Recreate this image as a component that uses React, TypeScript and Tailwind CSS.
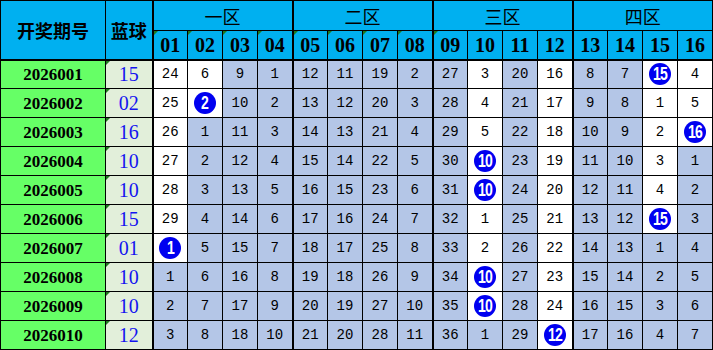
const draws = [
  { no: '2026001', ball: 15, miss: [24, 6, 9, 1, 12, 11, 19, 2, 27, 3, 20, 16, 8, 7, 0, 4] },
  { no: '2026002', ball: 2, miss: [25, 0, 10, 2, 13, 12, 20, 3, 28, 4, 21, 17, 9, 8, 1, 5] },
  { no: '2026003', ball: 16, miss: [26, 1, 11, 3, 14, 13, 21, 4, 29, 5, 22, 18, 10, 9, 2, 0] },
  { no: '2026004', ball: 10, miss: [27, 2, 12, 4, 15, 14, 22, 5, 30, 0, 23, 19, 11, 10, 3, 1] },
  { no: '2026005', ball: 10, miss: [28, 3, 13, 5, 16, 15, 23, 6, 31, 0, 24, 20, 12, 11, 4, 2] },
  { no: '2026006', ball: 15, miss: [29, 4, 14, 6, 17, 16, 24, 7, 32, 1, 25, 21, 13, 12, 0, 3] },
  { no: '2026007', ball: 1, miss: [0, 5, 15, 7, 18, 17, 25, 8, 33, 2, 26, 22, 14, 13, 1, 4] },
  { no: '2026008', ball: 10, miss: [1, 6, 16, 8, 19, 18, 26, 9, 34, 0, 27, 23, 15, 14, 2, 5] },
  { no: '2026009', ball: 10, miss: [2, 7, 17, 9, 20, 19, 27, 10, 35, 0, 28, 24, 16, 15, 3, 6] },
  { no: '2026010', ball: 12, miss: [3, 8, 18, 10, 21, 20, 28, 11, 36, 1, 29, 0, 17, 16, 4, 7] },
]

const zones = ['一区', '二区', '三区', '四区']
const nums = Array.from({ length: 16 }, (_, i) => i + 1)

// last row where each number came up; cells above it stay white
const lastHit = nums.map(n => {
  let idx = -1
  draws.forEach((d, i) => {
    if (d.ball === n) idx = i
  })
  return idx
})

function Flag() {
  return (
    <span className="absolute top-0 left-0 h-0 w-0 border-t-[4px] border-r-[4px] border-t-[#1f7a1f] border-r-transparent" />
  )
}

const serif = "font-['Liberation_Serif','Noto_Sans_CJK_SC',serif]"
const cjk = "font-['Noto_Sans_CJK_SC',sans-serif]"

export default function App() {
  return (
    <div className="w-[713px] h-[350px] overflow-hidden bg-white">
      <table className="table-fixed border-collapse border border-black leading-none">
        <colgroup>
          <col className="w-[105px]" />
          <col className="w-[47px]" />
          {nums.map(n => (
            <col key={n} className="w-[35px]" />
          ))}
        </colgroup>
        <thead>
          <tr className="h-[30px] bg-[#00b0f0]">
            <th
              rowSpan={2}
              className={`border border-black border-b-2 p-0 text-[18px] font-bold text-black ${cjk}`}
            >
              开奖期号
            </th>
            <th
              rowSpan={2}
              className={`border border-black border-b-2 border-r-2 p-0 text-[18px] font-bold text-black ${cjk}`}
            >
              蓝球
            </th>
            {zones.map(z => (
              <th
                key={z}
                colSpan={4}
                className={`border border-black border-l-2 p-0 text-[18px] font-normal text-black ${cjk}`}
              >
                {z}
              </th>
            ))}
          </tr>
          <tr className="h-[29px] bg-[#00b0f0]">
            {nums.map((n, i) => (
              <th
                key={n}
                className={`relative border border-black border-b-2 p-0 text-[20px] font-bold text-black ${serif} ${
                  i % 4 === 0 ? 'border-l-2' : ''
                }`}
              >
                {n < 10 && <Flag />}
                {String(n).padStart(2, '0')}
              </th>
            ))}
          </tr>
        </thead>
        <tbody>
          {draws.map((d, r) => (
            <tr key={d.no} className="h-[29px]">
              <td className={`border border-black bg-[#66ff66] p-0 text-center text-[17px] font-bold text-black ${serif}`}>
                {d.no}
              </td>
              <td
                className={`relative border border-black border-r-2 bg-[#e2efda] p-0 text-center text-[20px] text-[#1414f0] ${serif}`}
              >
                <Flag />
                {String(d.ball).padStart(2, '0')}
              </td>
              {d.miss.map((v, c) => {
                const hit = d.ball === c + 1
                const white = r <= lastHit[c]
                return (
                  <td
                    key={c}
                    className={`border border-black p-0 text-center text-[14px] text-black font-['Liberation_Mono',monospace] ${
                      white ? 'bg-white' : 'bg-[#b4c6e7]'
                    } ${c % 4 === 0 ? 'border-l-2' : ''}`}
                  >
                    {hit ? (
                      <span className="mx-auto flex h-[22px] w-[22px] items-center justify-center rounded-full bg-[#0000f0] text-white font-['Liberation_Sans',sans-serif]">
                        <span className="inline-block scale-x-[0.78] text-[18px] font-bold tracking-[-1px]">
                          {c + 1}
                        </span>
                      </span>
                    ) : (
                      v
                    )}
                  </td>
                )
              })}
            </tr>
          ))}
        </tbody>
      </table>
    </div>
  )
}
